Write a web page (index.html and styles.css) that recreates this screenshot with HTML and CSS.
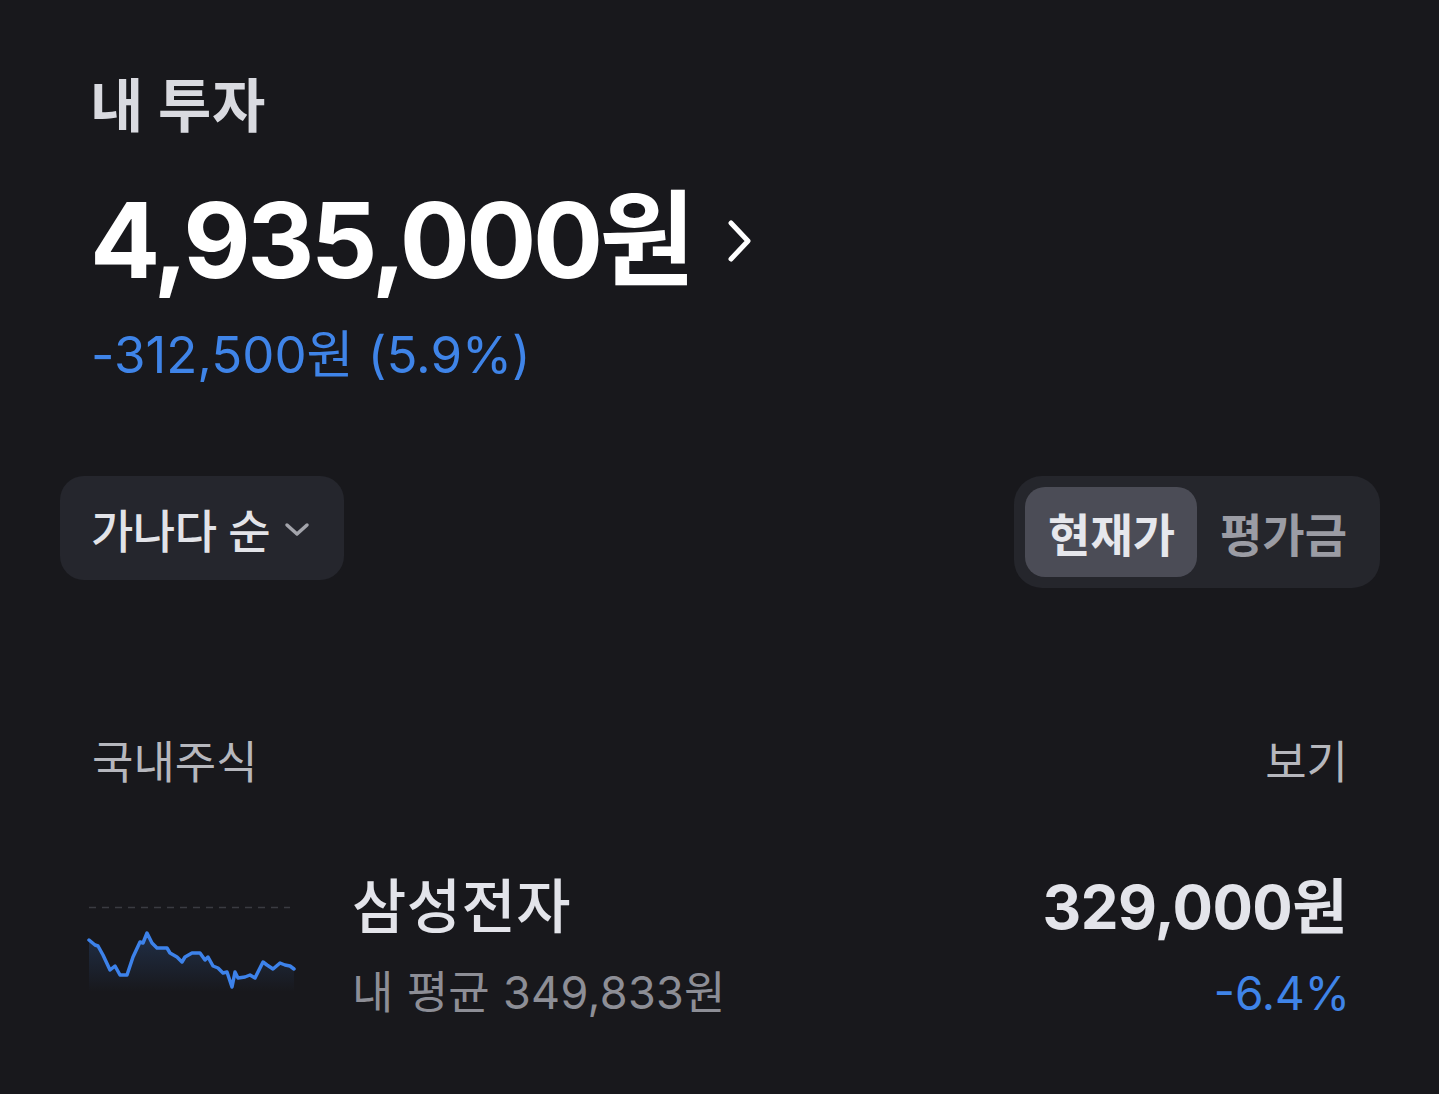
FILE: index.html
```html
<!DOCTYPE html>
<html lang="ko">
<head>
<meta charset="utf-8">
<title>내 투자</title>
<link rel="stylesheet" href="styles.css">
</head>
<body>
<main class="page">
  <h1 class="title">내 투자</h1>
  <div class="total">
    <span class="total-amount">4,935,000원</span>
    <svg class="total-chevron" width="28" height="44" viewBox="0 0 28 44" aria-hidden="true">
      <polyline points="6,4 23,22 6,40" fill="none" stroke="#ffffff" stroke-width="5" stroke-linecap="round" stroke-linejoin="round"/>
    </svg>
  </div>
  <div class="change">-312,500원 (5.9%)</div>

  <div class="controls">
    <button class="sort-btn">
      <span>가나다 순</span>
      <svg class="sort-chevron" width="26" height="16" viewBox="0 0 26 16" aria-hidden="true">
        <polyline points="3,3 13,12 23,3" fill="none" stroke="#a3a4ab" stroke-width="3.5" stroke-linecap="round" stroke-linejoin="round"/>
      </svg>
    </button>
    <div class="toggle">
      <span class="toggle-item active">현재가</span>
      <span class="toggle-item">평가금</span>
    </div>
  </div>

  <div class="section-head">
    <span class="section-label">국내주식</span>
    <span class="section-link">보기</span>
  </div>

  <div class="stock-row">
    <svg class="spark" width="210" height="95" viewBox="86 900 210 95" aria-hidden="true">
      <defs>
        <linearGradient id="sparkFill" x1="0" y1="0" x2="0" y2="1">
          <stop offset="0" stop-color="#3d7fe0" stop-opacity="0.22"/>
          <stop offset="1" stop-color="#3d7fe0" stop-opacity="0"/>
        </linearGradient>
      </defs>
      <line x1="89" y1="907.5" x2="290" y2="907.5" stroke="#3a3b41" stroke-width="1.5" stroke-dasharray="7 6"/>
      <polygon fill="url(#sparkFill)" points="89,940 95,945 98,946 103,955 110,970 115,966 120,975 127,975 133,957 140,942 143,943 147,933 152,943 157,948 167,948 170,953 177,957 182,962 185,957 192,953 200,953 205,960 208,957 213,966 218,968 223,973 227,972 232,987 235,972 238,978 245,977 250,975 255,978 263,962 267,965 273,969 280,963 285,965 290,966 294,969 294,992 89,992"/>
      <polyline fill="none" stroke="#3d82ea" stroke-width="3.5" stroke-linejoin="round" stroke-linecap="round" points="89,940 95,945 98,946 103,955 110,970 115,966 120,975 127,975 133,957 140,942 143,943 147,933 152,943 157,948 167,948 170,953 177,957 182,962 185,957 192,953 200,953 205,960 208,957 213,966 218,968 223,973 227,972 232,987 235,972 238,978 245,977 250,975 255,978 263,962 267,965 273,969 280,963 285,965 290,966 294,969"/>
    </svg>
    <div class="stock-info">
      <div class="stock-name">삼성전자</div>
      <div class="stock-sub">내 평균 349,833원</div>
    </div>
    <div class="stock-values">
      <div class="stock-price">329,000원</div>
      <div class="stock-rate">-6.4%</div>
    </div>
  </div>
</main>
</body>
</html>
```

FILE: styles.css
```css
* { box-sizing: border-box; }

html, body {
  margin: 0;
  padding: 0;
  background: #18181c;
}

body {
  font-family: Inter, "Noto Sans CJK KR", "Noto Sans", sans-serif;
  color: #e3e4ea;
  height: 1094px;
  overflow: hidden;
}

.page {
  padding: 66px 92px 0;
  display: flex;
  flex-direction: column;
}

.title {
  margin: 0 0 0 -2px;
  font-size: 58px;
  font-weight: 700;
  line-height: 80px;
  color: #d9dae0;
  letter-spacing: 0.5px;
}

.total {
  margin-top: 34px;
  display: flex;
  align-items: center;
  gap: 33px;
  height: 120px;
}

.total-amount {
  font-size: 104px;
  font-weight: 700;
  line-height: 120px;
  color: #ffffff;
  letter-spacing: -3.5px;
  margin-left: -2px;
}

.total-chevron {
  flex: none;
  margin-top: 2px;
}

.change {
  margin-top: 25px;
  margin-left: -1px;
  font-size: 51px;
  line-height: 60px;
  color: #3f84e8;
  letter-spacing: 0;
}

.controls {
  margin: 91px -33px 0 -32px;
  display: flex;
  justify-content: space-between;
  align-items: flex-start;
}

.sort-btn {
  height: 104px;
  padding: 0 34px 0 31px;
  border: none;
  border-radius: 24px;
  background: #25262d;
  color: #e2e3e8;
  font-family: inherit;
  font-size: 46px;
  font-weight: 500;
  display: flex;
  align-items: center;
  gap: 14px;
  letter-spacing: -0.5px;
}

.sort-chevron {
  margin-top: 4px;
}

.toggle {
  height: 112px;
  padding: 11px;
  border-radius: 28px;
  background: #25262c;
  display: flex;
  align-items: stretch;
}

.toggle-item {
  display: flex;
  align-items: center;
  padding: 0 22px 0 23px;
  border-radius: 20px;
  font-size: 46px;
  font-weight: 700;
  color: #9b9ca4;
  letter-spacing: 0;
}

.toggle-item.active {
  background: #4b4c56;
  color: #e6e7ec;
}

.section-head {
  margin-top: 147px;
  display: flex;
  justify-content: space-between;
  align-items: center;
  font-size: 45px;
  line-height: 56px;
  color: #b6b7bd;
  letter-spacing: 0;
}

.section-link {
  margin-right: -1px;
}

.stock-row {
  margin-top: 81px;
  display: flex;
  align-items: flex-start;
}

.spark {
  flex: none;
  margin: 28px 0 0 -6px;
}

.stock-info {
  margin-left: 56px;
  flex: 1;
}

.stock-name {
  font-size: 59px;
  font-weight: 500;
  line-height: 70px;
  color: #e3e4ea;
  letter-spacing: 0.5px;
}

.stock-sub {
  margin-top: 21px;
  font-size: 45px;
  line-height: 60px;
  color: #8d8e96;
  letter-spacing: 0.3px;
}

.stock-values {
  text-align: right;
}

.stock-price {
  font-size: 60px;
  font-weight: 700;
  line-height: 70px;
  color: #e3e4ea;
  letter-spacing: -0.5px;
}

.stock-rate {
  margin-top: 21px;
  margin-right: -3px;
  font-size: 46px;
  line-height: 60px;
  color: #3f84e8;
  letter-spacing: 0;
}
```
